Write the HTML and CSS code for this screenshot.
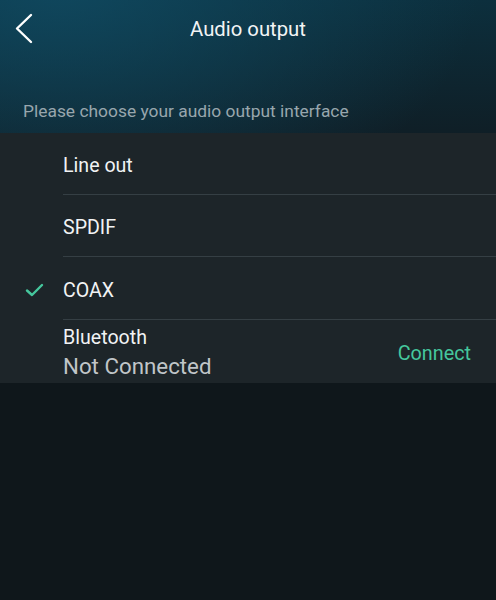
FILE: index.html
```html
<!DOCTYPE html>
<html>
<head>
<meta charset="utf-8">
<link rel="stylesheet" href="styles.css">
</head>
<body>
<div class="screen">
  <header class="topbar">
    <div class="back">
      <svg width="24" height="34" viewBox="0 0 24 34"><polyline points="17,3 3,16.5 17,30" fill="none" stroke="#fff" stroke-width="2.4" stroke-linecap="round" stroke-linejoin="round"/></svg>
    </div>
    <h1 class="title">Audio output</h1>
  </header>
  <p class="hint">Please choose your audio output interface</p>
  <ul class="list">
    <li class="row"><span class="mark"></span><span class="label">Line out</span></li>
    <li class="row"><span class="mark"></span><span class="label">SPDIF</span></li>
    <li class="row tall"><span class="mark">
      <svg width="20" height="16" viewBox="0 0 20 16"><polyline points="2,8.5 7,13 17,3" fill="none" stroke="#45c79d" stroke-width="2.4" stroke-linecap="round" stroke-linejoin="round"/></svg>
    </span><span class="label">COAX</span></li>
    <li class="row tall bt"><span class="mark"></span>
      <div class="bt-text"><span class="label">Bluetooth</span><span class="sub">Not Connected</span></div>
      <span class="connect">Connect</span>
    </li>
  </ul>
</div>
</body>
</html>
```

FILE: styles.css
```css
html, body {
  margin: 0;
  padding: 0;
  background: #0f171b;
}
.screen {
  width: 496px;
  height: 600px;
  font-family: Roboto, "Noto Sans", sans-serif;
  background:
    radial-gradient(ellipse 420px 260px at 60px -20px, rgba(16,76,100,0.85), rgba(16,76,100,0) 100%),
    linear-gradient(180deg, #0c2f3d 0px, #0f1f27 130px, #0f171b 200px, #0f171b 600px);
  overflow: hidden;
}
.topbar {
  height: 58px;
  display: flex;
  align-items: center;
  position: relative;
}
.back {
  position: absolute;
  left: 14px;
  top: 12px;
  height: 34px;
}
.title {
  margin: 0;
  width: 100%;
  text-align: center;
  font-weight: 400;
  font-size: 20.3px;
  color: #f2f4f5;
}
.hint {
  margin: 0;
  padding: 43px 0 0 23px;
  height: 32px;
  font-size: 17.4px;
  color: #98a6ad;
}
.list {
  list-style: none;
  margin: 0;
  padding: 0;
  background: #1d2529;
}
.row {
  display: flex;
  align-items: center;
  height: 62px;
  box-sizing: border-box;
  padding-top: 3px;
  position: relative;
}
.row.tall {
  height: 63px;
}
.row + .row::before {
  content: "";
  position: absolute;
  left: 63px;
  right: 0;
  top: -1px;
  height: 1px;
  background: #353f44;
}
.mark {
  width: 63px;
  flex: none;
  display: flex;
  justify-content: flex-start;
  padding-left: 25px;
  box-sizing: border-box;
}
.label {
  font-size: 19.6px;
  color: #f1f3f4;
}
.bt-text {
  display: flex;
  flex-direction: column;
  flex: 1;
  line-height: 1.2;
}
.sub {
  font-size: 22.3px;
  color: #c0c5c8;
  margin-top: 3px;
}
.connect {
  font-size: 19.8px;
  color: #45c79d;
  padding-right: 25px;
}
```
